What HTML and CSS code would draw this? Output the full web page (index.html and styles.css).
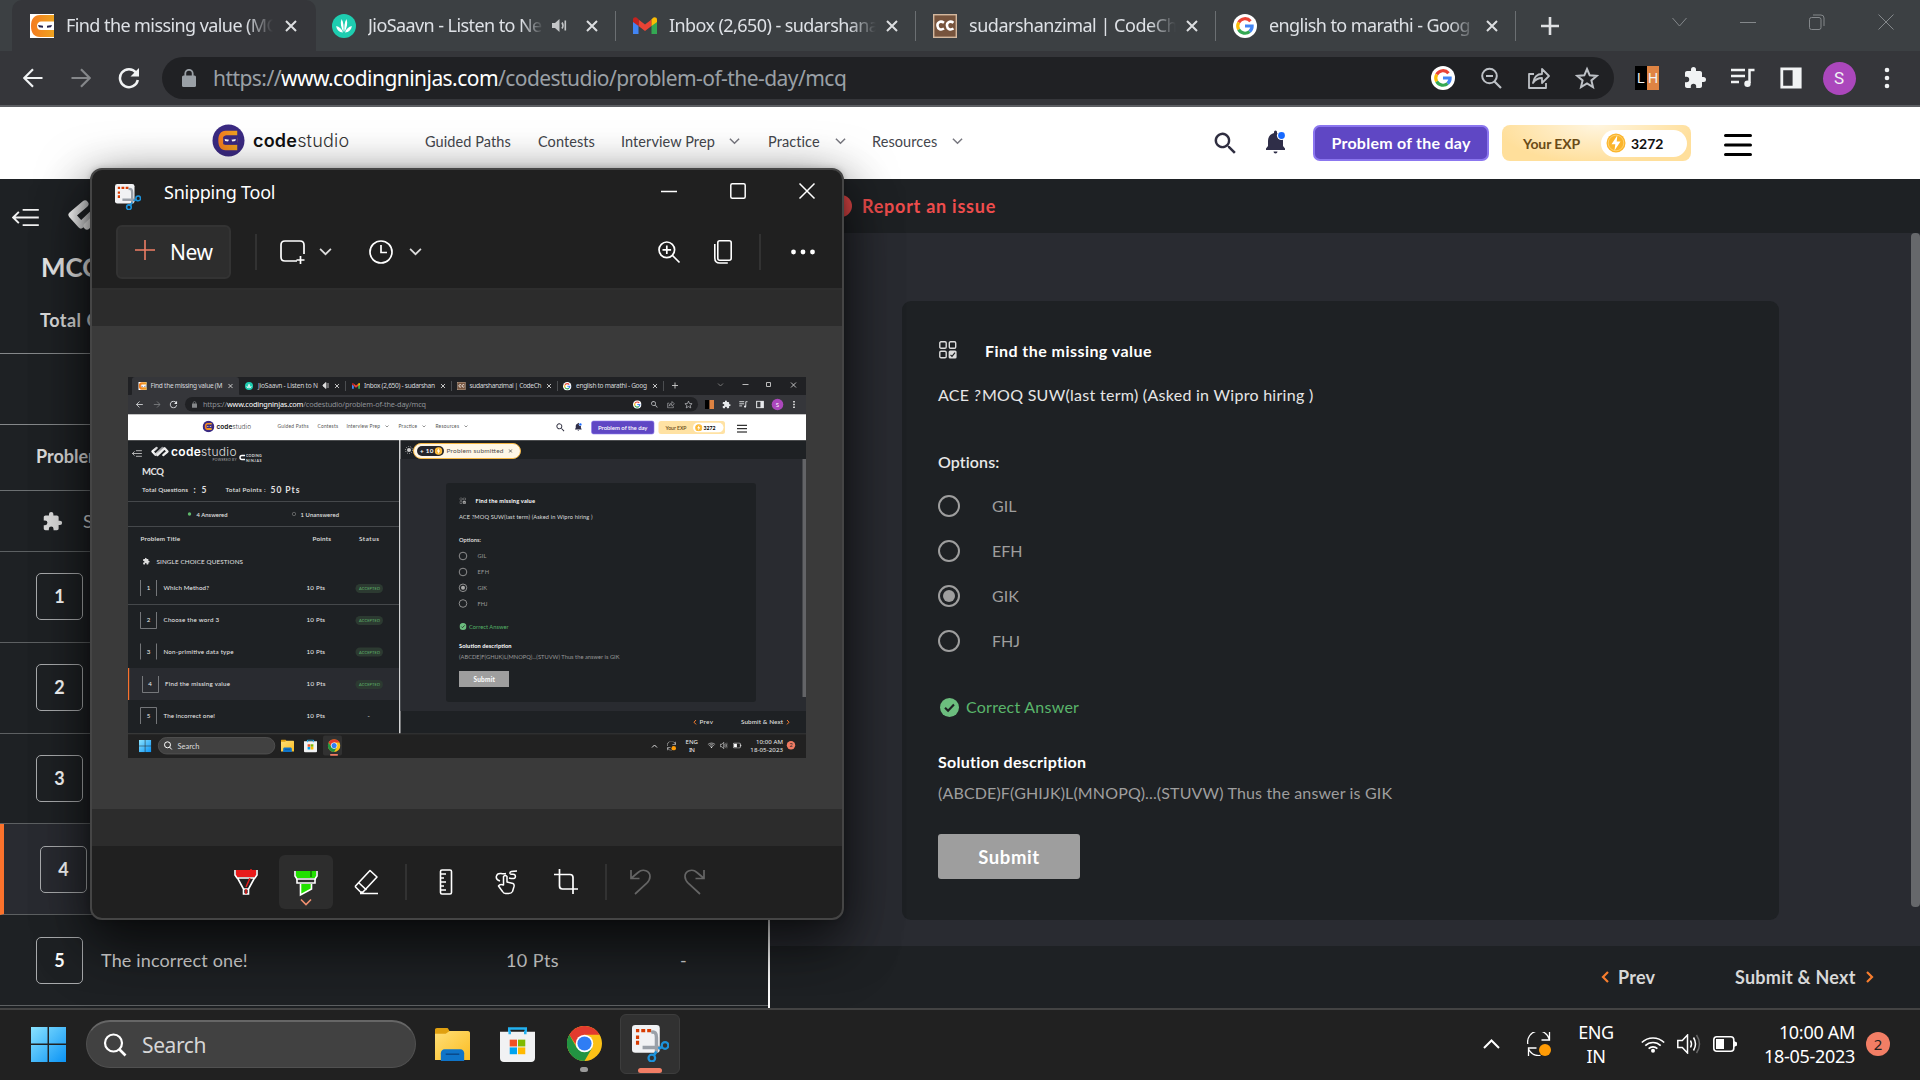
FILE: index.html
```html
<!DOCTYPE html>
<html lang="en">
<head>
<meta charset="utf-8">
<title>Find the missing value (MCQ)</title>
<link rel="stylesheet" href="styles.css">
</head>
<body>
<svg class="defs" width="0" height="0" aria-hidden="true">
  <defs>
    <linearGradient id="orange" x1="0" x2="1"><stop offset="0" stop-color="#f47b20"/><stop offset="1" stop-color="#eea320"/></linearGradient>
    <linearGradient id="winblue" x1="0" y1="0" x2="1" y2="1"><stop offset="0" stop-color="#8ae3ff"/><stop offset="1" stop-color="#0a93f5"/></linearGradient>
    <linearGradient id="folderfill" x1="0" y1="0" x2="1" y2="1"><stop offset="0" stop-color="#ffdf77"/><stop offset="1" stop-color="#fbbd23"/></linearGradient>
    <linearGradient id="silver" x1="0" x2="1"><stop offset="0" stop-color="#fff"/><stop offset="1" stop-color="#8b8d90"/></linearGradient>
    <symbol id="close" viewBox="0 0 12 12"><path d="M1 1l10 10M11 1L1 11" stroke="currentColor" stroke-width="2" fill="none"/></symbol>
    <symbol id="chev" viewBox="0 0 12 8"><path d="M1 1.5l5 5 5-5" stroke="currentColor" stroke-width="1.6" fill="none"/></symbol>
    <symbol id="ninja" viewBox="0 0 24 24"><rect width="24" height="24" fill="#fff"/><path d="M24 1H10C4 1 1 5 1 12s3 11 9 11h14v-7H11c-2 0-4-1-4-4s2-4.500 4-4.500h13z" fill="url(#orange)"/><path d="M8 11l5 .8v2l-4-.6zM22 11l-5 .8v2l4-.6z" fill="#25234f"/></symbol>
    <symbol id="ninjaround" viewBox="0 0 34 34"><circle cx="17" cy="17" r="16.500" fill="#3b2a82"/><path d="M26 7H14c-5 0-7.500 4-7.500 10S9 27 14 27h12v-5.500H15c-2 0-3-1-3-2.500h14v-5H12c0-1.500 1-2.500 3-2.500h11z" fill="url(#orange)"/><rect x="11.500" y="13" width="14.500" height="8" rx="1" fill="#3b2a82"/><path d="M13 15.500l4.500.8-1 1.700-3-.5zM24.500 15.500l-4.500.8 1 1.700 3-.5z" fill="#fff"/></symbol>
    <symbol id="saavn" viewBox="0 0 24 24"><circle cx="12" cy="12" r="12" fill="#1ecdb0"/><path d="M11.500 18C9 14 8 9 9.500 5c2 3 2.500 8 2 13zM12.500 18c2.500-4 3.500-9 2-13-2 3-2.500 8-2 13zM11 18.500c-4 0-6.500-3-6.800-6.500 3 .5 5.800 3 6.800 6.500zM13 18.500c4 0 6.500-3 6.800-6.500-3 .5-5.800 3-6.800 6.500z" fill="#fff"/></symbol>
    <symbol id="gmail" viewBox="0 0 24 18"><path d="M0 2v15h5.500V8.500z" fill="#4285f4"/><path d="M24 2v15h-5.500V8.500z" fill="#34a853"/><path d="M5.500 2.500v6.500L12 14l6.500-5V2.500L12 7.500z" fill="#ea4335"/><path d="M0 2.500C0 .5 2.500-.5 4 .8l1.500 1.700V9L0 5z" fill="#c5221f"/><path d="M24 2.500c0-2-2.500-3-4-1.700l-1.500 1.700V9L24 5z" fill="#fbbc04"/></symbol>
    <symbol id="gee" viewBox="0 0 24 24"><circle cx="12" cy="12" r="12" fill="#fff"/><g fill="none" stroke-width="3.200"><path d="M17.500 7.200A7.200 7.200 0 0 0 5.700 8.500" stroke="#ea4335"/><path d="M5.700 8.500a7.200 7.200 0 0 0 0 7" stroke="#fbbc05"/><path d="M5.700 15.500a7.200 7.200 0 0 0 11 2" stroke="#34a853"/><path d="M16.700 17.500a7.200 7.200 0 0 0 2.400-5.500H12" stroke="#4285f4"/></g></symbol>
    <symbol id="codechef" viewBox="0 0 24 24"><rect x=".7" y=".7" width="22.600" height="22.600" fill="#77543d" stroke="#d3b79d" stroke-width="1.400"/><path d="M11 8.800c-3.500-2.500-7-.5-6.500 3 .3 3.500 3.500 4.600 6.500 2.700M20.500 8.800c-3.500-2.500-7-.5-6.500 3 .3 3.500 3.500 4.600 6.500 2.700" fill="none" stroke="#fff" stroke-width="2.600"/></symbol>
    <symbol id="puzzle" viewBox="0 0 24 24"><path d="M20.500 11H19V7c0-1.100-.9-2-2-2h-4V3.500a2.500 2.500 0 0 0-5 0V5H4c-1.100 0-2 .9-2 2v3.800h1.500a2.700 2.700 0 0 1 0 5.400H2V20c0 1.100.9 2 2 2h3.800v-1.500a2.700 2.700 0 0 1 5.400 0V22H17c1.100 0 2-.9 2-2v-4h1.500a2.500 2.500 0 0 0 0-5z" fill="currentColor"/></symbol>
    <symbol id="lens" viewBox="0 0 24 24"><path d="M15.500 14h-.8l-.3-.3a6.500 6.500 0 1 0-.7.7l.3.300v.8l5 5 1.500-1.500zm-6 0a4.500 4.500 0 1 1 0-9 4.500 4.500 0 0 1 0 9z" fill="currentColor"/></symbol>
    <symbol id="share" viewBox="0 0 24 24"><path d="M7 8H2v14h17v-5M6 17c1-6 4-9 9-9V3l7 7-7 7v-5c-4 0-7 2-9 5z" stroke="currentColor" stroke-width="1.800" fill="none" stroke-linejoin="round"/></symbol>
    <symbol id="star" viewBox="0 0 24 24"><path d="M12 3l2.700 6.300 6.900.6-5.200 4.500 1.600 6.700-6-3.600-6 3.600 1.600-6.700-5.200-4.500 6.900-.6z" stroke="currentColor" stroke-width="2" fill="none"/></symbol>
    <symbol id="music" viewBox="0 0 24 20"><path d="M0 2h14M0 8h14M0 14h8M23.500 2h-5v13" stroke="currentColor" stroke-width="2.500" fill="none"/><circle cx="16.500" cy="15.800" r="3.200" fill="currentColor"/></symbol>
    <symbol id="panel" viewBox="0 0 22 22"><path d="M1.800 1.800h18.400v18.400H1.800zM14 2v18h5V2z" stroke="currentColor" stroke-width="2.800" fill="none"/><path d="M13 2h7v18h-7z" fill="currentColor"/></symbol>
    <symbol id="back" viewBox="0 0 20 20"><path d="M19.500 10H1.500M10 1.300L1.300 10l8.700 8.700" stroke="currentColor" stroke-width="2.200" fill="none"/></symbol>
    <symbol id="reload" viewBox="0 0 22 22"><path d="M18 5.500A9 9 0 1 0 19.800 13" stroke="currentColor" stroke-width="2.500" fill="none"/><path d="M21 1v8.500h-8.500z" fill="currentColor"/></symbol>
    <symbol id="lock" viewBox="0 0 14 18"><rect y="6.500" width="14" height="11.500" rx="1.500" fill="currentColor"/><path d="M3.300 8V4.500a3.700 3.700 0 0 1 7.400 0V8" stroke="currentColor" stroke-width="1.800" fill="none"/></symbol>
    <symbol id="bell" viewBox="0 0 24 26"><path d="M2 20v-1.500l2-2.500V11c0-4 2-7 6-8V2a1.500 1.500 0 0 1 3 0v1c4 1 6 4 6 8v5l2 2.500V20z" fill="#2f2e48"/><path d="M9.500 21.500h4a2 2 0 0 1-4 0z" fill="#2f2e48"/><circle cx="17.500" cy="5.500" r="4.600" fill="#fff"/><circle cx="17.500" cy="5.500" r="3.400" fill="#1769ff"/></symbol>
    <symbol id="coin" viewBox="0 0 20 20"><circle cx="10" cy="10" r="9.500" fill="#fbb52c"/><circle cx="10" cy="10" r="7.800" fill="none" stroke="#ffd26f" stroke-width="1"/><path d="M11.300 2.500L5.500 11.200h3.800l-.8 6.300 6-8.900h-3.800z" fill="#fff"/></symbol>
    <symbol id="grid" viewBox="0 0 18 18"><g fill="none" stroke="currentColor" stroke-width="1.400"><rect x=".8" y=".8" width="6.400" height="6.400" rx="1.200"/><rect x="10.300" y=".8" width="6.400" height="6.400" rx="1.200"/><rect x=".8" y="10.300" width="6.400" height="6.400" rx="1.200"/></g><rect x="9.600" y="9.600" width="8" height="8" rx="1.500" fill="currentColor"/><path d="M11.500 13.800l1.500 1.500 3-3.600" stroke="#1e2124" stroke-width="1.200" fill="none"/></symbol>
    <symbol id="tick" viewBox="0 0 20 20"><circle cx="10" cy="10" r="10" fill="#6cbd7e"/><path d="M5.300 10.200l3.200 3.200 6.200-6.600" stroke="#1e2124" stroke-width="2.200" fill="none"/></symbol>
    <symbol id="slash" viewBox="0 0 58 32"><path d="M19 5L6 16l9 10L37 5" fill="none" stroke="url(#silver)" stroke-width="7" stroke-linejoin="round" stroke-linecap="round"/><path d="M21 27L43 6l9 10-13 11" fill="none" stroke="#eee" stroke-width="7" stroke-linejoin="round" stroke-linecap="round"/></symbol>
    <symbol id="outdent" viewBox="0 0 28 20"><path d="M11 2h17M1 10h27M11 18h17M7 4l-6 6 6 6" stroke="currentColor" stroke-width="2" fill="none"/></symbol>
    <symbol id="windows" viewBox="0 0 36 36"><path d="M0 0h17v17H0zM18.500 0H36v17H18.500zM0 18.500h17V36H0zM18.500 18.500H36V36H18.500z" fill="url(#winblue)"/></symbol>
    <symbol id="folder" viewBox="0 0 36 34"><path d="M0 2C0 .7.8 0 2 0h10c1 0 1.500.5 2 1.500L16 5v4H0z" fill="#e0a010"/><path d="M0 6h11l4-3h19c1 0 2 1 2 2v28H0z" fill="url(#folderfill)"/><path d="M6 34V26c0-2 1.500-4 4-4h16c2.500 0 4 2 4 4v8z" fill="#0f74c8"/><path d="M11 27h14" stroke="#0a4a8c" stroke-width="1.600"/></symbol>
    <symbol id="store" viewBox="0 0 36 36"><path d="M9.500 8V1.500h17V8" fill="none" stroke="#22b1f0" stroke-width="2.600"/><path d="M0 5h36v27c0 3-1.500 4-4 4H4c-2.500 0-4-1-4-4z" fill="#f1f2f3"/><path d="M10 7.500V4M26 7.500V4" stroke="#22b1f0" stroke-width="2.600"/><path d="M10 13h7.500v7H10z" fill="#f25022"/><path d="M18.500 13H26v7h-7.500z" fill="#7fba00"/><path d="M10 21h7.500v7H10z" fill="#00a4ef"/><path d="M18.500 21H26v7h-7.500z" fill="#ffb900"/></symbol>
    <symbol id="chrome" viewBox="0 0 36 36"><circle cx="18" cy="18" r="18" fill="#fbc116"/><path d="M2.400 9A18 18 0 0 1 33.600 9H18L11 22z" fill="#e33b2e"/><path d="M2.400 9A18 18 0 0 0 18 36l7.800-13.500L18 26l-7.800-3.500z" fill="#229342"/><circle cx="18" cy="18" r="9" fill="#fff"/><circle cx="18" cy="18" r="7.300" fill="#2f7df4"/></symbol>
    <symbol id="snip" viewBox="0 0 28 28"><rect x="0" y="0" width="21" height="21" rx="2.500" fill="#f1f2f4"/><path d="M3 4.200h2.500M7 4.200h3M11.500 4.200h3M4.200 8v2.500M4.200 12v3" stroke="#d83b01" stroke-width="2.400"/><path d="M14.500 5.500c3-1 4 1 4 4V21M8 17h13" stroke="#9aa0a8" stroke-width="2.600" fill="none"/><circle cx="25" cy="15.500" r="2.500" fill="none" stroke="#1c93dc" stroke-width="1.700"/><circle cx="15" cy="25" r="2.500" fill="none" stroke="#1c93dc" stroke-width="1.700"/><path d="M16.500 23l2-3M20 18l3-1.500" stroke="#1c93dc" stroke-width="2"/></symbol>
    <symbol id="sync" viewBox="0 0 24 24"><path d="M.8 12A11 11 0 0 1 22.500 8M22.500 0v8h-8M1.500 24v-8h8M1.500 17c3 6 7 7 12 6.500" fill="none" stroke="#fff" stroke-width="1.300"/><circle cx="18" cy="18" r="6" fill="#ff9b05"/></symbol>
    <symbol id="wifi" viewBox="0 0 24 17"><g fill="none" stroke="#fff" stroke-width="1.600"><path d="M.8 6.500a16 16 0 0 1 22.400 0M4.300 9.600a11 11 0 0 1 15.400 0M7.600 12.600a6.500 6.500 0 0 1 8.800 0"/></g><circle cx="12" cy="14.800" r="2" fill="#fff"/></symbol>
    <symbol id="sound" viewBox="0 0 24 20"><path d="M.8 6.500h4.500L10.500 1v18l-5.200-5.500H.8z" fill="none" stroke="#fff" stroke-width="1.500"/><path d="M13.500 6.500q2 3.500 0 7M16.500 3.500q4 6.500 0 13" fill="none" stroke="#fff" stroke-width="1.500"/><path d="M19.500 1q6 9 0 18" fill="none" stroke="#666" stroke-width="1.500"/></symbol>
    <symbol id="battery" viewBox="0 0 24 16"><rect x=".8" y=".8" width="20" height="14.400" rx="3" fill="none" stroke="#fff" stroke-width="1.600"/><path d="M3 3h8v10H3zM21 5l3 1.500v3L21 11z" fill="#fff"/></symbol>
  </defs>
</svg>

<div class="screen">
  <div class="tabstrip">
    <div class="tab active"><svg class="fav"><use href="#ninja"/></svg><span class="tabtitle t1">Find the missing value (MC</span><svg class="x"><use href="#close"/></svg></div>
    <div class="tab"><svg class="fav"><use href="#saavn"/></svg><span class="tabtitle short t2">JioSaavn - Listen to Ne</span><svg class="spk" viewBox="0 0 15 13"><path d="M0 4h3l4.500-4v13L3 9H0z" fill="#c4c6c8"/><path d="M10 3.500q2 3 0 6M13.300 1.500v10" stroke="#c4c6c8" stroke-width="1.600" fill="none"/></svg><svg class="x"><use href="#close"/></svg></div>
    <div class="tab"><svg class="fav"><use href="#gmail"/></svg><span class="tabtitle t3">Inbox (2,650) - sudarshana</span><svg class="x"><use href="#close"/></svg></div>
    <div class="tab"><svg class="fav"><use href="#codechef"/></svg><span class="tabtitle t4">sudarshanzimal | CodeChe</span><svg class="x"><use href="#close"/></svg></div>
    <div class="tab"><svg class="fav"><use href="#gee"/></svg><span class="tabtitle t5">english to marathi - Goog</span><svg class="x"><use href="#close"/></svg></div>
    <svg class="plus" viewBox="0 0 18 18"><path d="M9 0v18M0 9h18" stroke="#dfe1e3" stroke-width="2.600"/></svg>
    <div class="wincontrols">
      <svg width="15" height="10" viewBox="0 0 15 10"><path d="M.5 1l7 8 7-8" stroke="#84888b" fill="none"/></svg>
      <svg width="16" height="10" viewBox="0 0 16 10"><path d="M0 5.500h16" stroke="#84888b"/></svg>
      <svg width="16" height="16" viewBox="0 0 16 16"><rect x=".5" y="3.500" width="11.500" height="12" rx="2" stroke="#84888b" fill="none"/><path d="M4 1h8q3 0 3 3v8" stroke="#84888b" fill="none"/></svg>
      <svg width="16" height="16" viewBox="0 0 16 16"><path d="M.5.500l15 15M15.500.500l-15 15" stroke="#84888b"/></svg>
    </div>
  </div>

  <div class="toolbar">
    <svg class="nav-i"><use href="#back"/></svg>
    <svg class="nav-i fwd"><use href="#back"/></svg>
    <svg class="nav-i big"><use href="#reload"/></svg>
    <div class="omnibox">
      <svg class="lock"><use href="#lock"/></svg>
      <span class="url">https://<b>www.codingninjas.com</b>/codestudio/problem-of-the-day/mcq</span>
      <div class="omni-icons">
        <svg><use href="#gee"/></svg>
        <svg viewBox="0 0 24 24"><circle cx="10.500" cy="10" r="7.300" fill="none" stroke="currentColor" stroke-width="2"/><path d="M7 10h7M15.500 15.500l6.500 6.500" stroke="currentColor" stroke-width="2.200"/></svg>
        <svg><use href="#share"/></svg>
        <svg><use href="#star"/></svg>
      </div>
    </div>
    <div class="ext">
      <div class="lh"><span>L</span><span>H</span></div>
      <svg><use href="#puzzle"/></svg>
      <svg class="mus"><use href="#music"/></svg>
      <svg class="pan"><use href="#panel"/></svg>
      <span class="avatar">S</span>
      <svg viewBox="0 0 24 24"><circle cx="12" cy="4" r="2.300" fill="#f1f3f4"/><circle cx="12" cy="12" r="2.300" fill="#f1f3f4"/><circle cx="12" cy="20" r="2.300" fill="#f1f3f4"/></svg>
    </div>
  </div>

  <header class="site">
    <div class="brand"><svg><use href="#ninjaround"/></svg><span><b>code</b>studio</span></div>
    <nav>
      <a class="n1">Guided Paths</a><a class="n2">Contests</a>
      <a class="n3">Interview Prep<svg class="cv"><use href="#chev"/></svg></a>
      <a class="n4">Practice<svg class="cv"><use href="#chev"/></svg></a>
      <a class="n5">Resources<svg class="cv"><use href="#chev"/></svg></a>
    </nav>
    <svg class="hsearch"><use href="#lens"/></svg>
    <svg class="hbell"><use href="#bell"/></svg>
    <button class="potd">Problem of the day</button>
    <div class="exp"><span class="explabel">Your EXP</span><span class="expval"><svg><use href="#coin"/></svg>3272</span></div>
    <svg class="burger" viewBox="0 0 28 22"><path d="M1.500 1.500h25M1.500 11h25M1.500 20.500h25" stroke="#000" stroke-width="3" stroke-linecap="round"/></svg>
  </header>

  <main>
    <aside>
      <div class="side-top">
        <div class="side-logo"><svg class="outd"><use href="#outdent"/></svg><svg class="slash"><use href="#slash"/></svg></div>
        <h1>MCQ</h1>
        <p class="tot">Total Q</p>
      </div>
      <div class="stats"></div>
      <div class="ptitle">Problem</div>
      <div class="section"><svg><use href="#puzzle"/></svg>S</div>
      <div class="row"><span class="num">1</span></div>
      <div class="row"><span class="num">2</span></div>
      <div class="row"><span class="num">3</span></div>
      <div class="row current"><span class="num">4</span></div>
      <div class="row last"><span class="num">5</span><span class="name">The incorrect one!</span><span class="pts">10 Pts</span><span class="st">-</span></div>
    </aside>
    <section class="content">
      <div class="issue"><span class="reddot"></span><span class="issuetext">Report an issue</span></div>
      <div class="scroll">
        <article>
          <h2><svg><use href="#grid"/></svg><span>Find the missing value</span></h2>
          <p class="q">ACE <i>?</i>&#8202;MOQ SUW(last term) (Asked in Wipro hiring )</p>
          <p class="opt">Options:</p>
          <label class="choice"><span class="radio"></span>GIL</label>
          <label class="choice"><span class="radio"></span>EFH</label>
          <label class="choice"><span class="radio on"></span>GIK</label>
          <label class="choice"><span class="radio"></span>FHJ</label>
          <p class="correct"><svg><use href="#tick"/></svg><span>Correct Answer</span></p>
          <h3>Solution description</h3>
          <p class="sol">(ABCDE)F(GHIJK)L(MNOPQ)...(STUVW) Thus the answer is GIK</p>
          <button class="submit">Submit</button>
        </article>
        <div class="bar"></div>
      </div>
      <footer>
        <svg class="or" viewBox="0 0 8 12"><path d="M7 1L2 6l5 5" stroke="#f77d2e" stroke-width="2.200" fill="none"/></svg><span class="prev">Prev</span>
        <span class="next">Submit &amp; Next</span><svg class="or" viewBox="0 0 8 12"><path d="M1 1l5 5-5 5" stroke="#f77d2e" stroke-width="2.200" fill="none"/></svg>
      </footer>
    </section>
  </main>

  <div class="taskbar">
    <svg class="start"><use href="#windows"/></svg>
    <div class="tsearch"><svg viewBox="0 0 24 24"><circle cx="10.500" cy="10" r="8.500" fill="none" stroke="#fff" stroke-width="2.200"/><path d="M16.500 16.500l6 6" stroke="#fff" stroke-width="2.600"/></svg><span>Search</span></div>
    <div class="apps">
      <svg><use href="#folder"/></svg>
      <svg><use href="#store"/></svg>
      <div class="app"><svg><use href="#chrome"/></svg><i class="dot"></i></div>
      <div class="app sel"><svg class="big"><use href="#snip"/></svg><i class="dash"></i></div>
    </div>
    <div class="tray">
      <svg width="17" height="10" viewBox="0 0 17 10"><path d="M1 9l7.500-7.500L16 9" stroke="#fff" stroke-width="2" fill="none"/></svg>
      <svg class="sync"><use href="#sync"/></svg>
      <div class="lang">ENG<br>IN</div>
      <svg class="wifi"><use href="#wifi"/></svg>
      <svg class="snd"><use href="#sound"/></svg>
      <svg class="bat"><use href="#battery"/></svg>
      <div class="clock">10:00 AM<br>18-05-2023</div>
      <span class="badge">2</span>
    </div>
  </div>
</div>

<div class="snipwin">
  <div class="stitle">
    <svg class="sico"><use href="#snip"/></svg><span>Snipping Tool</span>
    <div class="sctl">
      <svg viewBox="0 0 16 16"><path d="M0 8.500h16" stroke="#fff" stroke-width="1.500"/></svg>
      <svg viewBox="0 0 16 16"><rect x=".8" y=".8" width="14.400" height="14.400" rx="1.500" stroke="#fff" stroke-width="1.500" fill="none"/></svg>
      <svg viewBox="0 0 16 16"><path d="M.5.500l15 15M15.500.500l-15 15" stroke="#fff" stroke-width="1.500"/></svg>
    </div>
  </div>
  <div class="sbar">
    <div class="newbtn"><svg viewBox="0 0 20 20"><path d="M10 0v20M0 10h20" stroke="#ee7d64" stroke-width="1.600"/></svg><span>New</span></div>
    <i class="sep"></i>
    <svg class="rect" viewBox="0 0 26 24"><path d="M17 21H5q-4 0-4-4V5q0-4 4-4h15q4 0 4 4v9" fill="none" stroke="#fff" stroke-width="1.700"/><path d="M20.500 16v8M16.500 20h8" stroke="#fff" stroke-width="1.700"/></svg>
    <svg class="cv2"><use href="#chev"/></svg>
    <svg class="clk" viewBox="0 0 24 24"><circle cx="12" cy="12" r="11" fill="none" stroke="#fff" stroke-width="1.700"/><path d="M12 5v7.500h6" fill="none" stroke="#fff" stroke-width="1.700"/></svg>
    <svg class="cv2"><use href="#chev"/></svg>
    <div class="sright">
      <svg class="zoomi" viewBox="0 0 22 22"><circle cx="8.800" cy="8.800" r="7.800" fill="none" stroke="#fff" stroke-width="1.700"/><path d="M8.800 4.500v8.600M4.500 8.800h8.600M14.500 14.500l7 7" stroke="#fff" stroke-width="1.700"/></svg>
      <svg class="copyi" viewBox="0 0 18 24"><rect x="3.800" y=".8" width="13.400" height="19.400" rx="2" fill="none" stroke="#fff" stroke-width="1.600"/><path d="M.8 4v14q0 5 5 5h8" fill="none" stroke="#fff" stroke-width="1.600"/></svg>
      <i class="sep"></i>
      <svg class="dots" viewBox="0 0 24 6"><circle cx="2.500" cy="3" r="2.400" fill="#fff"/><circle cx="12" cy="3" r="2.400" fill="#fff"/><circle cx="21.500" cy="3" r="2.400" fill="#fff"/></svg>
    </div>
  </div>
  <div class="gutter top"></div>
  <div class="canvas">
    <svg class="mini" viewBox="0 0 678 381">
      <rect width="678" height="381" fill="#1e2124"/>
      <rect width="678" height="19" fill="#202124"/>
      <path d="M2 19q2 0 2-3V3q0-3 3-3h101q3 0 3 3v13q0 3 2 3z" fill="#35363a"/>
      <rect y="18" width="678" height="19.500" fill="#35363a"/>
      <rect x="57" y="20" width="513" height="14.500" rx="7.200" fill="#202124"/>
      <rect y="37" width="678" height="1" fill="#aaa"/>
      <rect y="37.700" width="678" height="25.500" fill="#fff"/>
      <g class="m-tab">
        <text x="22.500" y="11" textLength="72">Find the missing value (M</text>
        <text x="130" y="11" textLength="60">JioSaavn - Listen to N</text>
        <text x="236" y="11" textLength="71">Inbox (2,650) - sudarshan</text>
        <text x="341.500" y="11" textLength="72">sudarshanzimal | CodeCh</text>
        <text x="448" y="11" textLength="71">english to marathi - Goog</text>
      </g>
      <use href="#ninja" x="10" y="5" width="9" height="8"/><use href="#saavn" x="117" y="5" width="8" height="8"/><use href="#gmail" x="224" y="5.500" width="8" height="7"/><use href="#codechef" x="329" y="5" width="9" height="8"/><use href="#gee" x="435" y="5" width="8.500" height="8.500"/>
      <g color="#e3e3e3"><use href="#close" x="100" y="6.500" width="5" height="5"/><use href="#close" x="206.500" y="6.500" width="5" height="5"/><use href="#close" x="312.500" y="6.500" width="5" height="5"/><use href="#close" x="418.500" y="6.500" width="5" height="5"/><use href="#close" x="524.500" y="6.500" width="5" height="5"/></g>
      <path d="M195 8l3-2.500v6l-3-2.500zM200 6v5" stroke="#ddd" fill="#ddd" stroke-width=".8"/>
      <path d="M217.500 4v10M323.500 4v10M429.500 4v10M535.500 4v10" stroke="#4b4d50"/>
      <path d="M547 5.500v6M544 8.500h6M614.500 7.500h6M663 5.500l5 5M668 5.500l-5 5M638.500 5.500h4v4h-4z" stroke="#ccc" stroke-width=".9" fill="none"/><path d="M590 6.500l2.500 2.500 2.500-2.500" stroke="#777" fill="none"/>
      <g color="#e8eaed"><use href="#back" x="8" y="24" width="7" height="7"/><use href="#reload" x="41.500" y="23.500" width="8" height="8"/><use href="#puzzle" x="594" y="23" width="9" height="9"/><use href="#music" x="611" y="24" width="9" height="7"/><use href="#panel" x="628" y="23.500" width="8" height="8"/></g>
      <g color="#85878a"><use href="#back" x="-32.500" y="24" width="7" height="7" transform="scale(-1 1)"/><use href="#lock" x="64" y="24" width="5" height="7"/></g>
      <text x="75" y="29.700" textLength="223" class="m-url">https://<tspan fill="#fff">www.codingninjas.com</tspan>/codestudio/problem-of-the-day/mcq</text>
      <use href="#gee" x="505" y="23.300" width="8.500" height="8.500"/>
      <g color="#b8babd"><use href="#lens" x="522" y="23" width="9" height="9"/><use href="#share" x="539" y="23.500" width="8" height="8"/><use href="#star" x="556" y="23" width="9" height="9"/></g>
      <path d="M577 23h4.500v9H577z"/><path d="M581.500 23h4.500v9h-4.500z" fill="#de8342"/>
      <circle cx="649.500" cy="27.500" r="5.800" fill="#ab47bc"/><text x="647.700" y="30" fill="#fff" font-size="6">S</text>
      <path d="M666 24v7" stroke="#eee" stroke-width="1.600" stroke-dasharray="1.600 1.100"/>

      <use href="#ninjaround" x="74.500" y="43.500" width="12" height="12"/>
      <text x="88.500" y="52" textLength="34.500" class="m-logo small"><tspan class="m-code">code</tspan>studio</text>
      <g class="m-nav"><text x="149.500" y="51.200" textLength="31">Guided Paths</text><text x="189.500" y="51.200" textLength="20.500">Contests</text><text x="218.500" y="51.200" textLength="33.500">Interview Prep</text><text x="270.500" y="51.200" textLength="18.500">Practice</text><text x="307.500" y="51.200" textLength="23.500">Resources</text></g>
      <path d="M257.500 48.500l1.500 1.500 1.500-1.500M294.500 48.500l1.500 1.500 1.500-1.500M336.500 48.500l1.500 1.500 1.500-1.500" stroke="#777" fill="none" stroke-width=".8"/>
      <g color="#2b2b3b"><use href="#lens" x="427" y="45" width="11" height="11"/></g><use href="#bell" x="446" y="45.500" width="9" height="9"/>
      <rect x="463.500" y="44" width="62.500" height="13" rx="2" fill="#5f47c4" stroke="#8f79ee" stroke-width=".6"/><text x="470" y="53" textLength="49.500" font-size="6" font-weight="600" fill="#fff">Problem of the day</text>
      <rect x="530.500" y="44" width="66.500" height="13" rx="2.500" fill="#ffe2a3"/><rect x="565" y="45.800" width="30.500" height="9.500" rx="4.700" fill="#fff"/><text x="537.500" y="52.500" textLength="21" font-size="5.200" font-weight="600" fill="#6b4d18">Your EXP</text><use href="#coin" x="567" y="47" width="7.500" height="7.500"/><text x="575.500" y="52.500" textLength="12" font-size="5.200" font-weight="700">3272</text>
      <path d="M609 48.300h10M609 51.700h10M609 55h10" stroke="#000"/>

      <g color="#eee"><use href="#outdent" x="4" y="73" width="10" height="7"/></g>
      <use href="#slash" x="22.500" y="67" width="19" height="15"/>
      <text x="43" y="79" textLength="65.500" class="m-logo"><tspan class="m-code">code</tspan>studio</text>
      <text x="84.500" y="84.200" textLength="24" font-size="3.300" fill="#aaa">POWERED BY</text>
      <path d="M117 78.500h-3q-2 0-2 2t2 2h3" stroke="#fff" stroke-width="1.500" fill="none"/><text x="118" y="80.300" textLength="15.500" font-size="3.600" font-weight="700" fill="#ddd">CODING</text><text x="118" y="84.500" textLength="15.500" font-size="3.600" font-weight="700" fill="#ddd">NINJAS</text>
      <g class="m-side">
        <text x="14" y="98" textLength="22" font-size="9.500" font-weight="700">MCQ</text>
        <text x="14" y="115.300" textLength="46">Total Questions</text><text x="65.500" y="115.500" textLength="13" font-size="8.500" font-weight="700">: 5</text>
        <text x="97.500" y="115.300" textLength="40">Total Points :</text><text x="142.500" y="115.500" textLength="29" font-size="8.500" font-weight="700">50 Pts</text>
        <text x="68.500" y="139.500" textLength="31" font-size="5.800">4 Answered</text><text x="172.500" y="139.500" textLength="38.500" font-size="5.800">1 Unanswered</text>
        <text x="12.500" y="163.500" textLength="39.500">Problem Title</text><text x="184.500" y="163.500" textLength="18.500">Points</text><text x="231" y="163.500" textLength="20">Status</text>
        <text x="28.500" y="186.500" textLength="86.500" class="m-light">SINGLE CHOICE QUESTIONS</text>
      </g>
      <circle cx="61.500" cy="137" r="1.700" fill="#5fb86b"/><circle cx="166" cy="137" r="1.700" fill="none" stroke="#888" stroke-width=".6"/>
      <path d="M0 124.500h271M0 149.500h271M0 227.500h271M0 356.500h271" stroke="#45484b"/>
      <rect y="291" width="271" height="32" fill="#292b30"/><rect y="291" width="1.200" height="32" fill="#fb722c"/>
      <g color="#ddd"><use href="#puzzle" x="14.500" y="180.500" width="7.500" height="7.500"/></g>
      <path d="M12.500 203v16M28.500 203v16M12.500 235v16.500h16V235M12.500 266.500v16M28.500 266.500v16M14.500 299v16.500h16V299M28.500 330.500v16.500M12.500 347v-16.500h16" fill="none" stroke="#8a8d8f" stroke-width=".8"/>
      <g class="m-row">
        <text x="18.800" y="213.300">1</text><text x="35.500" y="213.300" textLength="45.500">Which Method?</text><text x="178.500" y="213.300" textLength="18.500">10 Pts</text>
        <text x="18.800" y="245.300">2</text><text x="35.500" y="245.300" textLength="55.500">Choose the word 3</text><text x="178.500" y="245.300" textLength="18.500">10 Pts</text>
        <text x="18.800" y="277">3</text><text x="35.500" y="277" textLength="70">Non-primitive data type</text><text x="178.500" y="277" textLength="18.500">10 Pts</text>
        <text x="20.300" y="309">4</text><text x="37" y="309" textLength="65">Find the missing value</text><text x="178.500" y="309" textLength="19">10 Pts</text>
        <text x="18.800" y="341">5</text><text x="35.500" y="341" textLength="51.500">The incorrect one!</text><text x="178.500" y="341" textLength="18.500">10 Pts</text><text x="239.500" y="341">-</text>
      </g>
      <g fill="#2c3a31"><rect x="227.500" y="207" width="27.500" height="9" rx="4.500"/><rect x="227.500" y="239" width="27.500" height="9" rx="4.500"/><rect x="227.500" y="270.500" width="27.500" height="9" rx="4.500"/><rect x="227.500" y="303" width="27.500" height="9" rx="4.500"/></g>
      <g class="m-acc"><text x="231" y="213" textLength="21">ACCEPTED</text><text x="231" y="245" textLength="21">ACCEPTED</text><text x="231" y="276.500" textLength="21">ACCEPTED</text><text x="231" y="309" textLength="21">ACCEPTED</text></g>
      <rect x="271.200" y="63" width="1.200" height="294" fill="#fff"/>

      <rect x="272.400" y="82" width="405.600" height="252" fill="#292b30"/>
      <rect x="318" y="106" width="310" height="219" rx="3" fill="#1e2124"/>
      <rect x="674.500" y="82" width="3.500" height="238" fill="#636467"/>
      <circle cx="281" cy="73" r="2" fill="#ccc"/><circle cx="281" cy="73" r="3.500" fill="none" stroke="#ccc" stroke-dasharray=".8 1.400"/>
      <rect x="285.500" y="66.500" width="107" height="15" rx="7.500" fill="#fff7e6" stroke="#f2b544"/>
      <rect x="289" y="69" width="27" height="10" rx="5" fill="#26262b"/><text x="292" y="76.300" textLength="13.500" font-size="6.300" fill="#fff" font-weight="700">+ 10</text><use href="#coin" x="306.500" y="70" width="8" height="8"/>
      <text x="318.500" y="76.300" textLength="57" font-size="6.500" fill="#50504e">Problem submitted</text><g color="#333"><use href="#close" x="380.500" y="72" width="4" height="4"/></g>
      <g color="#aaa"><use href="#grid" x="331.500" y="120.500" width="6.500" height="6.500"/></g>
      <g class="m-card">
        <text x="347.500" y="126" textLength="59.500" font-weight="700" fill="#fff">Find the missing value</text>
        <text x="331" y="141.500" textLength="133.500" fill="#ddd">ACE ?MOQ SUW(last term) (Asked in Wipro hiring )</text>
        <text x="331" y="165" textLength="22" font-weight="600" fill="#e5e5e5">Options:</text>
        <text x="349.500" y="181" textLength="9">GIL</text><text x="349.500" y="197" textLength="11.500">EFH</text><text x="349.500" y="212.800" textLength="9.500">GIK</text><text x="349.500" y="228.800" textLength="10">FHJ</text>
        <text x="341" y="252" textLength="39.500" fill="#54b266">Correct Answer</text>
        <text x="331" y="271.200" textLength="52.500" font-weight="700" fill="#fff">Solution description</text>
        <text x="331" y="282" textLength="160.500">(ABCDE)F(GHIJK)L(MNOPQ)...(STUVW) Thus the answer is GIK</text>
      </g>
      <g fill="none" stroke="#999" stroke-width=".9"><circle cx="335" cy="179" r="3.800"/><circle cx="335" cy="195" r="3.800"/><circle cx="335" cy="210.800" r="3.800"/><circle cx="335" cy="226.500" r="3.800"/></g><circle cx="335" cy="210.800" r="2" fill="#aaa"/>
      <use href="#tick" x="331.500" y="246" width="7" height="7"/>
      <rect x="331" y="294" width="50" height="16" fill="#9e9e9e"/><text x="345.500" y="304.500" textLength="21.500" font-size="6.500" font-weight="700" fill="#fff">Submit</text>
      <g font-size="6.300" font-weight="600" fill="#ddd"><text x="571.500" y="347.200" textLength="13.500">Prev</text><text x="613" y="347.200" textLength="42">Submit &amp; Next</text></g>
      <path d="M568 343l-2 2.200 2 2.200M659 343l2 2.200-2 2.200" fill="none" stroke="#f77d2e"/>

      <rect y="356.500" width="678" height="24.500" fill="#212121"/><path d="M0 356.800h678" stroke="#3c3c3c" stroke-width=".8"/>
      <use href="#windows" x="11" y="363" width="12.300" height="12.300"/>
      <rect x="30.300" y="360.500" width="116.500" height="16.500" rx="8.200" fill="#414141" stroke="#5a5a5a" stroke-width=".7"/><circle cx="39.500" cy="367.800" r="3" fill="none" stroke="#fff"/><path d="M41.500 370l2.300 2.500" stroke="#fff"/><text x="49.500" y="371.500" textLength="22" font-size="7.500" fill="#ddd">Search</text>
      <use href="#folder" x="153" y="362.500" width="13" height="12.500"/><use href="#store" x="176" y="362.500" width="13" height="13"/>
      <rect x="195" y="358.500" width="19" height="20" rx="2" fill="#313131"/><use href="#chrome" x="199.800" y="362.300" width="12.600" height="12.600"/><rect x="202" y="377" width="8" height="1.700" rx=".8" fill="#f07c62"/>
      <path d="M524 370.500l2.500-2.500 2.500 2.500" stroke="#ddd" fill="none"/><use href="#sync" x="539" y="364.500" width="9" height="9"/><use href="#wifi" x="579.500" y="365" width="8" height="6.500"/><use href="#sound" x="592" y="365" width="8.500" height="7"/><use href="#battery" x="605" y="365.500" width="8.500" height="6"/>
      <g class="m-tray"><text x="557.500" y="367.200" textLength="12.500">ENG</text><text x="561" y="375.300" textLength="6">IN</text><text x="628" y="366.500" textLength="27">10:00 AM</text><text x="622.300" y="375.300" textLength="32.700">18-05-2023</text></g>
      <circle cx="663" cy="368.300" r="4.200" fill="#ee7a62"/><text x="661.500" y="370.300" font-size="5.500" fill="#222">2</text>
    </svg>
  </div>
  <div class="gutter"></div>
  <div class="tools">
    <svg viewBox="0 0 24 26"><path d="M2 1h20v7H2z" fill="#e81b1b"/><path d="M1 1v5l2 3h18l2-3V1M3.500 9L9.500 20v5h5v-5l6-11M9.500 20h5" fill="none" stroke="#fff" stroke-width="1.600"/><path d="M17 0v6M16 9l-4 9M12 20v5" stroke="#e81b1b" stroke-width="1.500"/></svg>
    <div class="tsel"><svg viewBox="0 0 24 26"><path d="M2 1h20v7H2z" fill="#22e000"/><path d="M7 14h10v5L7 25z" fill="#22e000"/><path d="M1 1v5l2 3v4h18V9l2-3V1M2 9h20M6.500 14v11L17.500 19v-5" fill="none" stroke="#fff" stroke-width="1.600"/><path d="M17 1v6" stroke="#0a5a00" stroke-width="1.200"/></svg><svg class="cvo"><use href="#chev"/></svg></div>
    <svg viewBox="0 0 24 26"><path d="M1.500 17L16 1.500l7 6.500L9 23H6.500l-5-5zM4.500 13.500l8 7.500M6 24.500h18" fill="none" stroke="#fff" stroke-width="1.600" stroke-linejoin="round"/></svg>
    <i class="sep"></i>
    <svg viewBox="0 0 24 26"><rect x="6.500" y="1" width="11" height="24" rx="1.500" fill="none" stroke="#fff" stroke-width="1.600"/><path d="M7 5h5M7 9h3M7 13h5M7 17h3M7 21h5" stroke="#fff" stroke-width="1.500"/></svg>
    <svg viewBox="0 0 24 26"><path d="M9.500 16V7.500q1.800-1.800 3.500 0V13l6 1.500q1.500.5 1 3l-1.500 5q-1 2-4 2h-3q-2 0-3-2l-4-5.500q1.500-2.500 5-1zM6 12C0 10 2 4 7 4.500q3 .5 5 0M15 9q8 2 6-3c-1.500-2-4 .5-5-1.500-.5-2 2-2.500 7-2.500" fill="none" stroke="#fff" stroke-width="1.500" stroke-linejoin="round"/></svg>
    <svg viewBox="0 0 24 26"><path d="M5.500 0v17q0 3 3 3H24M0 5.500h16q3 0 3 3V25" fill="none" stroke="#fff" stroke-width="1.700"/></svg>
    <i class="sep"></i>
    <svg class="dim" viewBox="0 0 24 26"><path d="M2 1v8.500h8.500M2.500 9L9 3.500c5-4.500 12-1.500 12 4 0 3-1.500 5-3.500 7L6 25" fill="none" stroke="#656565" stroke-width="1.700"/></svg>
    <svg class="dim" viewBox="0 0 24 26"><path d="M22 1v8.500h-8.500M21.500 9L15 3.500C10-1 3 2 3 7.500c0 3 1.500 5 3.500 7L18 25" fill="none" stroke="#656565" stroke-width="1.700"/></svg>
  </div>
</div>
</body>
</html>
```

FILE: styles.css
```css
* { box-sizing: border-box; margin: 0; padding: 0; }
body { width: 1920px; height: 1080px; overflow: hidden; position: relative; font-family: "Noto Sans", "Open Sans", sans-serif; color: #fff; }
svg { display: block; flex: none; overflow: visible; }
.defs { position: absolute; }
.screen { display: flex; flex-direction: column; width: 1920px; height: 1080px; }

/* browser tabs */
.tabstrip { display: flex; align-items: center; height: 51px; background: #3c4043; padding-left: 15px; flex: none; }
.tab { width: 300px; height: 30px; display: flex; align-items: center; padding: 0 17px; border-right: 1px solid #6b6f72; flex: none; color: #dee1e6; }
.tab.active { height: 51px; margin-left: -3px; width: 304px; padding: 0 19px 0 18px; background: #35363a; border-radius: 10px 10px 0 0; border: 0; }
.tab:nth-child(2) { padding-left: 16px; }
.fav { width: 24px; height: 24px; margin-right: 12px; }
.tabtitle { font-size: 18px; line-height: 28px; width: 207px; overflow: hidden; white-space: nowrap; letter-spacing: -0.58px; margin-top: -1px; -webkit-mask-image: linear-gradient(90deg, #000 87%, transparent 100%); mask-image: linear-gradient(90deg, #000 87%, transparent 100%); }
.tabtitle.short { width: 176px; }
.t4 { letter-spacing: -0.48px; }
.x { width: 12px; height: 12px; margin-left: auto; color: #dcdee0; }
.spk { width: 15px; height: 13px; margin-left: 8px; }
.plus { width: 18px; height: 18px; margin-left: 25px; }
.wincontrols { margin: -8px 26px 0 auto; display: flex; gap: 53px; align-items: center; }

/* address row */
.toolbar { display: flex; align-items: center; height: 56px; background: #35363a; border-bottom: 2px solid #5c5e62; padding-left: 23px; flex: none; }
.nav-i { width: 20px; height: 20px; margin-right: 28px; color: #f1f3f4; }
.nav-i.fwd { transform: scaleX(-1); color: #85878a; margin-right: 27px; }
.nav-i.big { width: 22px; height: 22px; margin-right: 22px; }
.omnibox { width: 1452px; height: 42px; border-radius: 21px; background: #202124; display: flex; align-items: center; padding: 0 15px 0 20px; }
.lock { width: 14px; height: 18px; color: #9aa0a6; margin-right: 17px; }
.url { font-size: 21px; letter-spacing: -0.55px; color: #9aa0a6; white-space: nowrap; }
.url b { font-weight: 400; color: #fff; }
.omni-icons { margin-left: auto; display: flex; gap: 24px; color: #bdc1c6; }
.omni-icons svg { width: 24px; height: 24px; }
.ext { display: flex; align-items: center; gap: 24px; margin-left: 21px; color: #f1f3f4; }
.ext > svg { width: 24px; height: 24px; margin: 0; }
.ext .mus { height: 20px; }
.ext .pan { width: 22px; height: 22px; margin: 0 1px; }
.lh { width: 24px; height: 24px; display: flex; background: linear-gradient(90deg, #000 50%, #df8443 50%); font: 14px/24px "Liberation Sans", sans-serif; }
.lh span { width: 12px; text-align: center; }
.avatar { width: 33px; height: 33px; border-radius: 50%; background: #ab47bc; font: 17px/33px Roboto, sans-serif; text-align: center; margin: 0 -4.5px; }

/* site header */
.site { display: flex; height: 72px; flex: none; background: #fff; padding: 0 0 0 212px; align-items: center; font-family: Lato, sans-serif; }
.brand { display: flex; align-items: center; width: 213px; height: 34px; margin-top: -5px; color: #333; font: 300 18px/34px Inter, sans-serif; letter-spacing: 0.2px; }
.brand svg { width: 33px; height: 33px; margin-right: 8px; }
.brand b { font-weight: 600; color: #111; }
nav { display: flex; width: 790px; margin-top: -4px; color: #44464c; font-size: 14.5px; letter-spacing: 0.08px; }
nav a { display: flex; align-items: center; white-space: nowrap; }
.n1 { width: 113px; } .n2 { width: 83px; } .n3 { width: 147px; } .n4 { width: 104px; }
.cv { width: 11px; height: 8px; color: #77777f; margin-left: 15px; }
.n3 .cv { margin-left: 14px; }
.hsearch { width: 29px; height: 29px; color: #2f2e40; margin-left: -4px; }
.hbell { width: 24px; height: 26px; margin-left: 24px; }
.potd { width: 176px; height: 36px; margin-left: 25px; border: 2px solid #8b76ef; border-radius: 7px; background: #5f47c4; color: #fff; font: 700 16px/30px Lato, sans-serif; letter-spacing: 0.25px; flex: none; white-space: nowrap; }
.exp { width: 189px; height: 36px; margin-left: 13px; border-radius: 8px; background: radial-gradient(ellipse at 50% 0, #fff5df 0, #ffdf9b 75%); display: flex; align-items: center; justify-content: space-between; padding: 0 4px 0 21px; flex: none; }
.explabel { color: #6a4b17; font-weight: 700; font-size: 14px; letter-spacing: -0.1px; }
.expval { width: 86px; height: 27px; background: #fff; border-radius: 14px; color: #111; font-weight: 700; font-size: 14px; display: flex; align-items: center; padding-left: 5px; }
.expval svg { width: 20px; height: 20px; margin-right: 5px; }
.burger { width: 28px; height: 22px; margin-left: 33px; margin-top: 4px; }

/* page body */
main { display: flex; height: 829px; flex: none; font-family: Lato, sans-serif; }
aside { width: 770px; border-right: 2px solid #fff; background: #1e2124; color: #ddd; flex: none; }
.side-top { height: 175px; border-bottom: 1px solid #85888a; padding-left: 12px; }
.side-logo { display: flex; align-items: center; height: 76px; }
.outd { width: 27px; height: 19px; color: #f1f1f1; }
.slash { width: 58px; height: 32px; margin: -4px 0 0 27px; }
h1 { font: 700 26px/32px Lato, sans-serif; margin: -4px 0 0 29px; color: #e8e8e8; }
.tot { font-weight: 700; font-size: 18px; line-height: 24px; margin: 25px 0 0 28px; letter-spacing: 0.5px; }
.stats { height: 71px; border-bottom: 1px solid #85888a; }
.ptitle { height: 66px; border-bottom: 1px solid #6c7072; padding-left: 36px; line-height: 63px; font-weight: 700; font-size: 18px; }
.section { height: 61px; display: flex; align-items: center; padding-left: 42px; font-size: 18px; border-bottom: 1px solid #5c6062; }
.section svg { width: 21px; height: 21px; margin-right: 20px; }
.row { height: 90.8px; display: flex; align-items: center; padding-left: 36px; border-bottom: 1px solid #5d6062; font-size: 18px; }
.num { width: 47px; height: 47px; border: 1px solid #a9abad; border-radius: 5px; line-height: 45px; text-align: center; color: #fff; font-weight: 700; margin-right: 18px; }
.name { width: 405px; letter-spacing: 0.15px; }
.current { background: #292b31; border-left: 4px solid #fb722c; }
.pts { width: 174px; letter-spacing: 0.4px; }

.content { flex: 1; display: flex; flex-direction: column; background: #292b31; }
.issue { height: 54px; background: #1e2124; display: flex; align-items: center; padding: 0 0 1px 60px; color: #ef4d4d; font-weight: 700; font-size: 18px; }
.reddot { width: 22px; height: 22px; border-radius: 50%; background: #e34848; margin-right: 10px; }
.issuetext { letter-spacing: 0.75px; }
.scroll { height: 713px; display: flex; justify-content: space-between; padding-left: 132px; }
article { width: 877px; height: 619px; margin-top: 68px; border-radius: 9px; background: #1e2124; padding: 38px 36px; font-size: 16px; line-height: 24px; }
h2 { display: flex; align-items: center; font: 700 16px/24px Lato, sans-serif; letter-spacing: 0.45px; }
h2 svg { width: 18px; height: 18px; margin: -2px 28px 0 1px; color: #dcdcdc; }
.q { margin-top: 20px; color: #e6e6e6; white-space: nowrap; letter-spacing: 0.28px; }
.opt { margin: 43px 0 9px; font-weight: 600; color: #e8e8e8; letter-spacing: 0.1px; }
.choice { display: flex; align-items: center; height: 45px; color: #9e9e9e; }
.radio { width: 22px; height: 22px; border: 2px solid #9e9e9e; border-radius: 50%; margin-right: 32px; padding: 3px; }
.radio.on::before { content: ""; display: block; width: 12px; height: 12px; border-radius: 50%; background: #9e9e9e; }
.correct { display: flex; align-items: center; color: #5ab56b; margin-top: 32px; letter-spacing: 0.25px; }
.correct svg { width: 19px; height: 19px; margin: 0 7px 0 2px; }
h3 { font: 700 16px/24px Lato, sans-serif; margin-top: 31px; letter-spacing: 0.28px; }
.sol { color: #9e9e9e; margin-top: 7px; white-space: nowrap; letter-spacing: 0.15px; }
.submit { display: block; margin-top: 29px; width: 142px; height: 45px; border: 0; border-radius: 3px; background: #9e9e9e; color: #fff; font: 700 18.5px/42px Lato, sans-serif; letter-spacing: 0.6px; }
.bar { width: 9px; height: 674px; background: #66686b; border-radius: 4px; }
footer { height: 62px; background: #1e2124; display: flex; align-items: center; padding-left: 831px; font-size: 18px; font-weight: 700; color: #d8d8d8; letter-spacing: 0.25px; }
.or { width: 8px; height: 12px; }
.prev { width: 117px; margin-left: 9px; }
.next { width: 123px; margin-right: 8px; white-space: nowrap; }

/* taskbar */
.taskbar { position: relative; z-index: 5; display: flex; align-items: center; height: 72px; background: #212121; border-top: 2px solid #434343; padding: 0 0 2px 31px; }
.start { width: 35px; height: 35px; margin-right: 20px; }
.tsearch { width: 330px; height: 48px; border-radius: 24px; background: #414141; border: 1px solid #505050; border-top: 2px solid #666; display: flex; align-items: center; padding-left: 16px; font-size: 21px; letter-spacing: -0.4px; color: #d6d6d6; }
.tsearch svg { width: 24px; height: 24px; margin-right: 15px; }
.apps { display: flex; align-items: center; margin-left: 19px; }
.apps svg { width: 35px; height: 35px; }
.apps > svg { margin-right: 30px; }
.apps .app { width: 60px; height: 60px; display: flex; flex-direction: column; align-items: center; padding-top: 12px; margin-left: -11px; margin-right: 17px; border-radius: 6px; }
.apps .sel { background: #313131; border: 1px solid #3d3d3d; padding-top: 10px; margin-right: 0; }
.apps .app .big { width: 37px; height: 37px; }
.dot { width: 8px; height: 5px; border-radius: 3px; background: #9a9a9a; margin-top: 6px; }
.dash { width: 24px; height: 5px; border-radius: 3px; background: #f27e65; margin-top: 6px; }
.tray { margin-left: auto; display: flex; align-items: center; font-size: 18px; line-height: 24px; letter-spacing: -0.3px; padding-right: 30px; }
.sync { width: 24px; height: 24px; margin: 0 27px 0 27px; }
.lang { width: 36px; text-align: center; margin-top: -1px; letter-spacing: -0.4px; }
.wifi { width: 24px; height: 17px; margin-left: 27px; }
.snd { width: 24px; height: 20px; margin-left: 12px; }
.bat { width: 24px; height: 16px; margin-left: 12px; }
.clock { width: 105px; text-align: right; margin: -1px 0 0 13px; white-space: nowrap; }
.badge { width: 24px; height: 24px; border-radius: 50%; background: #f27e65; color: #222; text-align: center; font-size: 15px; margin-left: 11px; }

/* floating window */
.snipwin { position: absolute; left: 90px; top: 168px; width: 754px; height: 752px; border: 2px solid #454545; border-radius: 12px; overflow: hidden; background: #202020; display: flex; flex-direction: column; box-shadow: 0 14px 52px rgba(0, 0, 0, 0.6), 0 32px 60px rgba(0, 0, 0, 0.3), 0 0 6px rgba(0, 0, 0, 0.2); }
.stitle { height: 47px; display: flex; align-items: flex-start; padding: 12px 27px 0 23px; font-size: 18px; letter-spacing: -0.25px; line-height: 20px; flex: none; }
.stitle span { margin-left: 23px; }
.sico { width: 26px; height: 26px; margin-top: 2px; }
.sctl { display: flex; gap: 53px; margin: 1px 0 0 auto; }
.sctl svg { width: 16px; height: 16px; }
.sbar { height: 73px; border-bottom: 2px solid #2e2e2e; display: flex; align-items: center; padding: 0 27px 2px 24px; flex: none; color: #ddd; }
.newbtn { width: 115px; height: 54px; background: #2d2d2d; border: 2px solid #333; border-radius: 6px; display: flex; align-items: center; padding-left: 17px; font-size: 21px; letter-spacing: -0.5px; color: #fff; }
.newbtn svg { width: 20px; height: 20px; margin: -4px 15px 0 0; }
.sep { width: 2px; height: 36px; background: #323232; display: block; }
.newbtn + .sep { margin: 0 23px 0 24px; }
.rect { width: 26px; height: 24px; }
.cv2 { width: 13px; height: 9px; margin-left: 13px; }
.clk { width: 24px; height: 24px; margin-left: 37px; }
.clk + .cv2 { margin-left: 16px; }
.sright { margin-left: auto; display: flex; align-items: center; }
.zoomi { width: 22px; height: 22px; }
.copyi { width: 18px; height: 24px; margin: 0 27px 0 34px; }
.dots { width: 24px; height: 6px; margin-left: 30px; }
.gutter { height: 37px; background: #2c2c2c; flex: none; }
.gutter.top { height: 36px; }
.canvas { height: 483px; background: #3a3a3a; padding: 51px 36px; flex: none; }
.mini { width: 678px; height: 381px; font-family: Lato, sans-serif; overflow: hidden; }
.m-tab { font: 6.6px "Noto Sans", sans-serif; fill: #d5d7da; }
.m-url { font: 7.3px "Noto Sans", sans-serif; fill: #8d9196; }
.m-nav { font-size: 4.9px; fill: #555; }
.m-logo { font: 300 12px Inter, sans-serif; fill: #ddd; }
.m-logo .m-code { font-weight: 600; fill: #fff; }
.m-logo.small { font-size: 6.5px; fill: #444; }
.m-logo.small .m-code { fill: #111; }
.m-side { font-size: 6.3px; font-weight: 600; fill: #e2e2e2; }
.m-light { font-weight: 400; }
.m-row { font-size: 6.2px; fill: #eee; }
.m-acc { font-size: 4px; fill: #5fb36b; }
.m-card { font-size: 5.7px; fill: #999; }
.m-tray { font: 6.1px "Noto Sans", sans-serif; fill: #eee; }
.tools { flex: 1; display: flex; align-items: center; padding-left: 142px; }
.tools > svg, .tsel svg:first-child { width: 24px; height: 26px; }
.tsel { width: 54px; height: 54px; border-radius: 6px; background: #2d2d2d; margin: 0 21px; padding: 15px 15px 0; }
.tsel .cvo { width: 12px; height: 8px; margin: 2px 0 0 6px; color: #f09070; }
.tools .sep { margin: 0 27px; }
.tools > .sep + svg { margin-right: 36px; }
.tools > .sep + svg + svg { margin-right: 36px; }
.tools > .dim.dim { margin-right: 29px; }
.tools > .sep ~ .sep { margin-right: 22px; }
```
